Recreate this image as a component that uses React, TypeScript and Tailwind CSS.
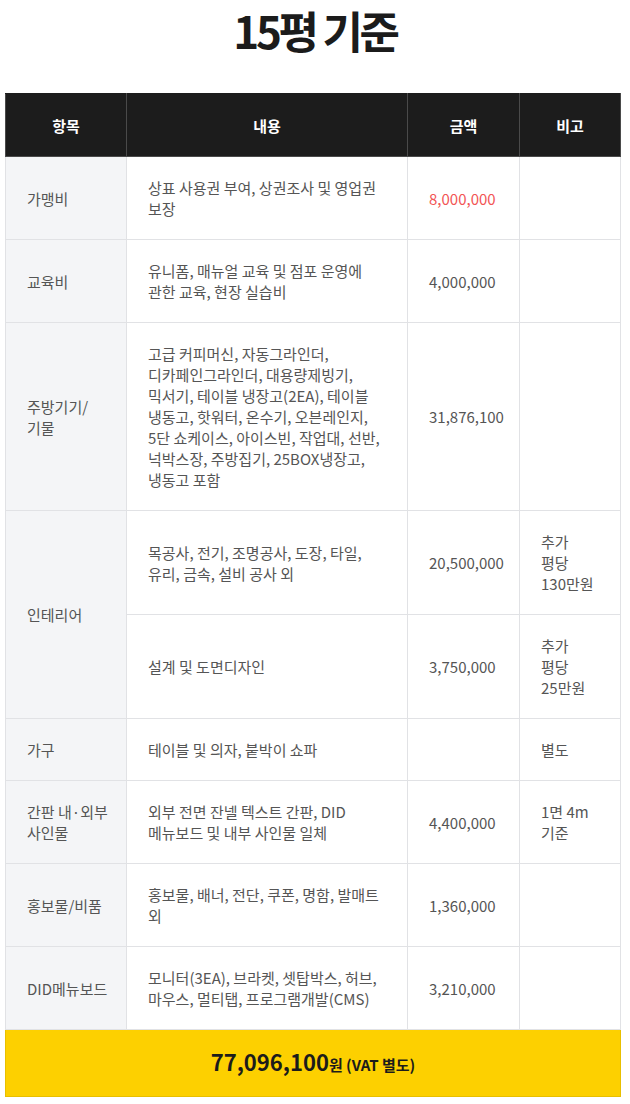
import React from "react";

type Row = {
  item?: React.ReactNode;
  rowSpan?: number;
  content: string;
  amount: string;
  remark?: React.ReactNode;
  highlight?: boolean;
};

const ROWS: Row[] = [
  { item: "가맹비", content: "상표 사용권 부여, 상권조사 및 영업권 보장", amount: "8,000,000", highlight: true },
  { item: "교육비", content: "유니폼, 매뉴얼 교육 및 점포 운영에 관한 교육, 현장 실습비", amount: "4,000,000" },
  {
    item: (
      <>
        주방기기/<wbr />기물
      </>
    ),
    content:
      "고급 커피머신, 자동그라인더, 디카페인그라인더, 대용량제빙기, 믹서기, 테이블 냉장고(2EA), 테이블 냉동고, 핫워터, 온수기, 오븐레인지, 5단 쇼케이스, 아이스빈, 작업대, 선반, 넉박스장, 주방집기, 25BOX냉장고, 냉동고 포함",
    amount: "31,876,100",
  },
  {
    item: "인테리어",
    rowSpan: 2,
    content: "목공사, 전기, 조명공사, 도장, 타일, 유리, 금속, 설비 공사 외",
    amount: "20,500,000",
    remark: "추가 평당 130만원",
  },
  { content: "설계 및 도면디자인", amount: "3,750,000", remark: "추가 평당 25만원" },
  { item: "가구", content: "테이블 및 의자, 붙박이 쇼파", amount: "", remark: "별도" },
  { item: "간판 내·외부 사인물", content: "외부 전면 잔넬 텍스트 간판, DID 메뉴보드 및 내부 사인물 일체", amount: "4,400,000", remark: "1면 4m 기준" },
  { item: "홍보물/비품", content: "홍보물, 배너, 전단, 쿠폰, 명함, 발매트 외", amount: "1,360,000" },
  { item: "DID메뉴보드", content: "모니터(3EA), 브라켓, 셋탑박스, 허브, 마우스, 멀티탭, 프로그램개발(CMS)", amount: "3,210,000" },
];

const cell = "border border-[#e1e2e5] py-[20px] pl-[21px] align-middle text-left";

export default function App() {
  return (
    <div className="min-h-[1104px] bg-white font-['Noto_Sans_CJK_KR','Noto_Sans',sans-serif] text-[15px] leading-[21px] text-[#555]">
      <h1 className="text-center text-[44px] font-bold leading-[60px] tracking-[-0.075em] text-[#1b1b1b]">
        15평 기준
      </h1>

      <table className="mt-[33px] ml-[5px] w-[615px] table-fixed border-collapse break-keep">
        <colgroup>
          <col className="w-[121px]" />
          <col className="w-[281px]" />
          <col className="w-[112px]" />
          <col className="w-[101px]" />
        </colgroup>
        <thead>
          <tr className="h-[63px] bg-[#1c1c1c] font-bold text-white">
            {["항목", "내용", "금액", "비고"].map((h) => (
              <th key={h} className="border border-[#4a4a4a] border-t-[#1c1c1c] text-center align-middle font-bold">
                {h}
              </th>
            ))}
          </tr>
        </thead>
        <tbody>
          {ROWS.map((r, i) => (
            <tr key={i}>
              {r.item !== undefined && (
                <td rowSpan={r.rowSpan} className={`${cell} bg-[#f4f5f7] pr-[16px]`}>
                  {r.item}
                </td>
              )}
              <td className={`${cell} pr-[17px]`}>{r.content}</td>
              <td className={`${cell} pr-[10px] ${r.highlight ? "text-[#f25454]" : ""}`}>{r.amount}</td>
              <td className={`${cell} pr-[25px]`}>{r.remark}</td>
            </tr>
          ))}
          <tr>
            <td
              colSpan={4}
              className="h-[67px] border border-[#e8bf00] border-t-[#fdd000] bg-[#fdd000] text-center align-middle font-bold text-[#1b1b1b]"
            >
              <span className="text-[22px]">77,096,100</span>
              <span className="text-[15px]">원 (VAT 별도)</span>
            </td>
          </tr>
        </tbody>
      </table>
    </div>
  );
}
